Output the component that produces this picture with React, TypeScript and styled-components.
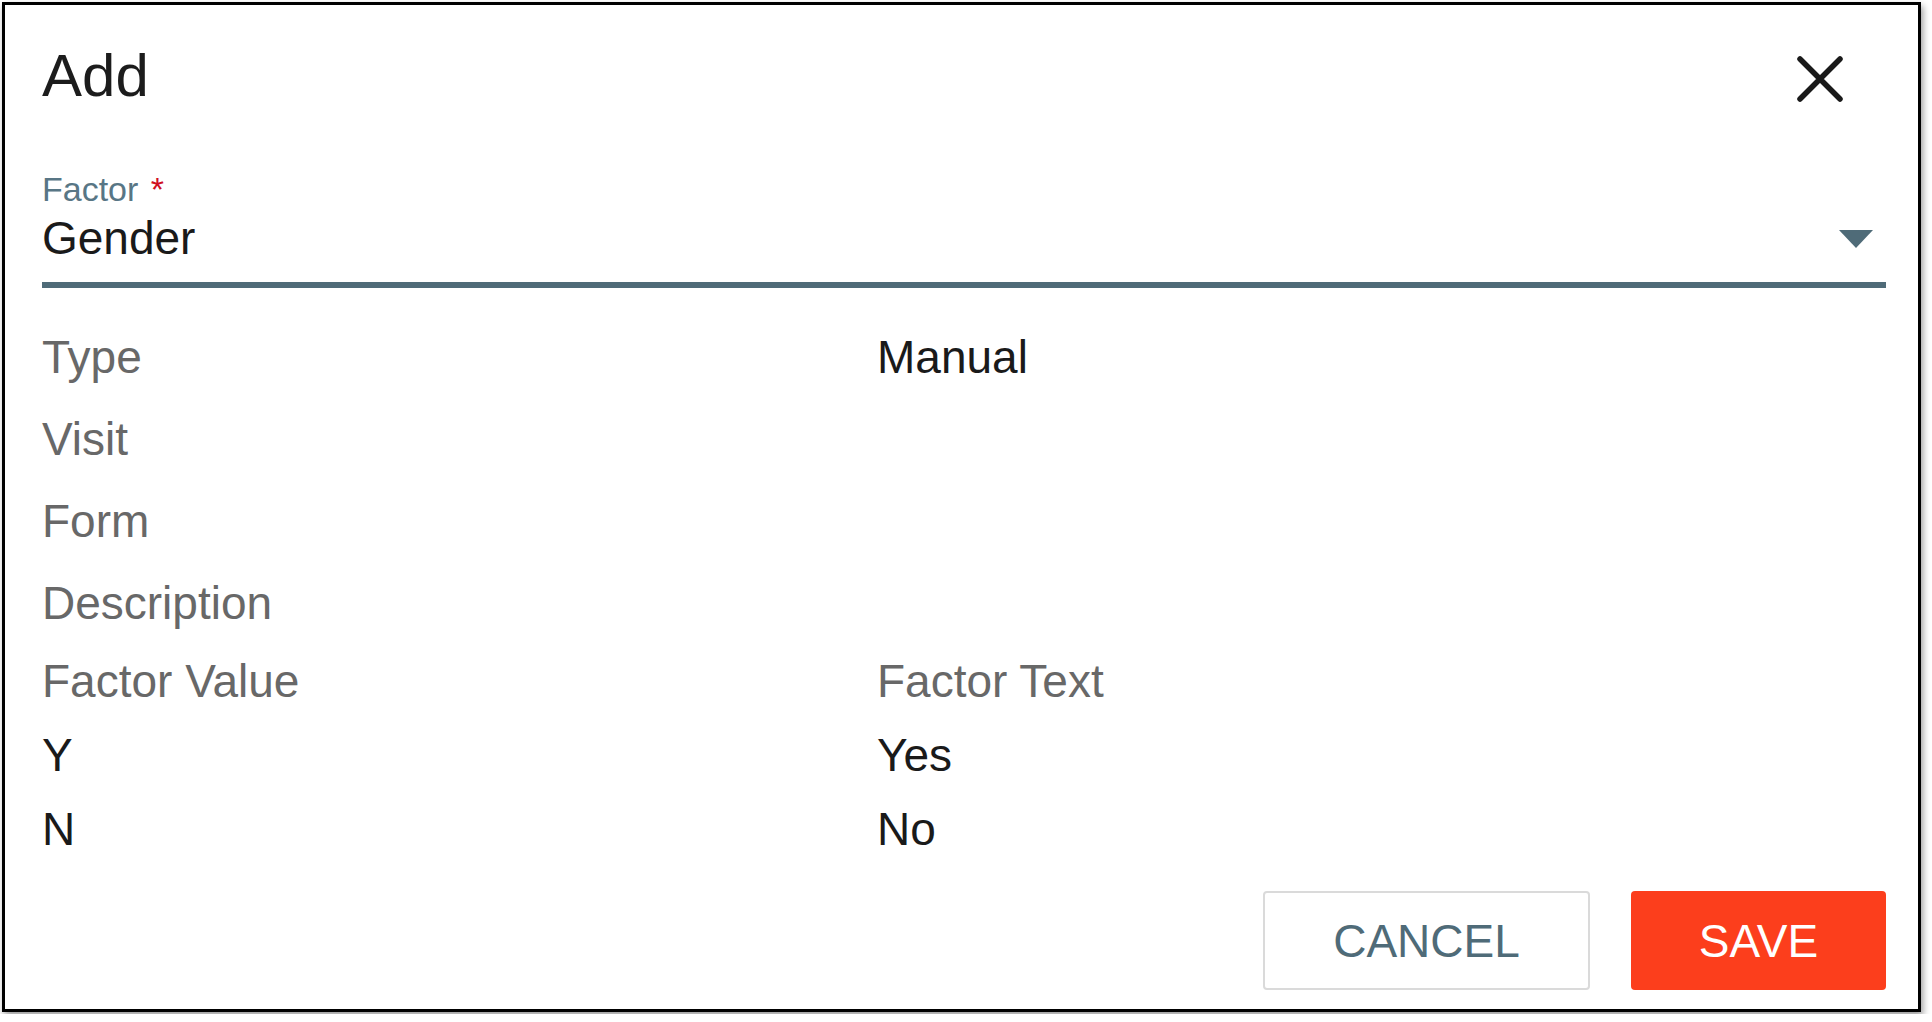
import React from 'react'
import styled, { createGlobalStyle } from 'styled-components'

const GlobalStyle = createGlobalStyle`
  body {
    margin: 0;
    background: #ffffff;
    font-family: "Liberation Sans", Arial, Helvetica, sans-serif;
  }
`

const Dialog = styled.div`
  margin: 2px;
  width: 1919px;
  height: 1010px;
  box-sizing: border-box;
  border: 3px solid #000000;
  box-shadow: 2px 4px 7px rgba(0, 0, 0, 0.4);
  background: #ffffff;
  padding: 36px 32px 19px 37px;
  display: flex;
  flex-direction: column;
`

const Header = styled.div`
  display: flex;
  align-items: center;
  justify-content: space-between;
  height: 70px;
`

const Title = styled.h2`
  margin: 0;
  font-size: 60px;
  line-height: 70px;
  font-weight: 400;
  color: #1c1c1c;
`

const CloseButton = styled.button`
  width: 48px;
  height: 48px;
  padding: 0;
  margin: 6px 42px 0 0;
  border: 0;
  background: none;
  cursor: pointer;
  display: flex;
`

const Field = styled.div`
  margin-top: 58px;
`

const FieldLabel = styled.div`
  font-size: 34px;
  line-height: 40px;
  color: #587685;
`

const Required = styled.span`
  color: #d0111f;
  margin-left: 3px;
`

const ValueRow = styled.div`
  display: flex;
  align-items: center;
  justify-content: space-between;
  padding: 2px 0 17px;
  border-bottom: 6px solid #4f6b78;
`

const SelectValue = styled.div`
  font-size: 46px;
  line-height: 54px;
  color: #1a1a1a;
`

const Arrow = styled.svg`
  margin: 2px 13px 0 0;
`

const Details = styled.div`
  padding-top: 28px;
  display: grid;
  grid-template-columns: 835px 1fr;
  grid-auto-rows: 82px;
`

const FactorTable = styled.div`
  display: grid;
  grid-template-columns: 835px 1fr;
  grid-auto-rows: 74px;
`

const Cell = styled.div<{ $muted?: boolean; $row?: number }>`
  font-size: 46px;
  line-height: ${({ $row }) => $row || 82}px;
  color: ${({ $muted }) => ($muted ? '#686868' : '#1a1a1a')};
  white-space: nowrap;
`

const Footer = styled.div`
  margin-top: auto;
  display: flex;
  justify-content: flex-end;
  gap: 41px;
`

const ActionButton = styled.button<{ $primary?: boolean }>`
  height: 99px;
  width: ${({ $primary }) => ($primary ? 255 : 327)}px;
  box-sizing: border-box;
  border-radius: 4px;
  border: ${({ $primary }) => ($primary ? 'none' : '2px solid #dadada')};
  background: ${({ $primary }) => ($primary ? '#fc3e1c' : '#ffffff')};
  color: ${({ $primary }) => ($primary ? '#ffffff' : '#4f6b78')};
  font-family: "Liberation Sans", Arial, Helvetica, sans-serif;
  font-size: 46px;
  text-transform: uppercase;
  padding: 0;
  cursor: pointer;
`

const details = [
  { label: 'Type', value: 'Manual' },
  { label: 'Visit', value: '' },
  { label: 'Form', value: '' },
  { label: 'Description', value: '' },
]

const factorValues = [
  { value: 'Y', text: 'Yes' },
  { value: 'N', text: 'No' },
]

const App = () => {
  return (
    <>
      <GlobalStyle />
      <Dialog>
        <Header>
          <Title>Add</Title>
          <CloseButton aria-label="close">
            <svg width="48" height="48" viewBox="0 0 48 48">
              <path
                d="M4 4 L44 44 M44 4 L4 44"
                stroke="#1a1a1a"
                strokeWidth="5.5"
                strokeLinecap="round"
                fill="none"
              />
            </svg>
          </CloseButton>
        </Header>

        <Field>
          <FieldLabel>
            Factor<Required> *</Required>
          </FieldLabel>
          <ValueRow>
            <SelectValue>Gender</SelectValue>
            <Arrow width="34" height="18" viewBox="0 0 34 18">
              <polygon points="0,0 34,0 17,18" fill="#4f6b78" />
            </Arrow>
          </ValueRow>
        </Field>

        <Details>
          {details.map(d => (
            <React.Fragment key={d.label}>
              <Cell $muted>{d.label}</Cell>
              <Cell>{d.value}</Cell>
            </React.Fragment>
          ))}
        </Details>

        <FactorTable>
          <Cell $muted $row={74}>Factor Value</Cell>
          <Cell $muted $row={74}>Factor Text</Cell>
          {factorValues.map(f => (
            <React.Fragment key={f.value}>
              <Cell $row={74}>{f.value}</Cell>
              <Cell $row={74}>{f.text}</Cell>
            </React.Fragment>
          ))}
        </FactorTable>

        <Footer>
          <ActionButton>Cancel</ActionButton>
          <ActionButton $primary>Save</ActionButton>
        </Footer>
      </Dialog>
    </>
  )
}

export default App
